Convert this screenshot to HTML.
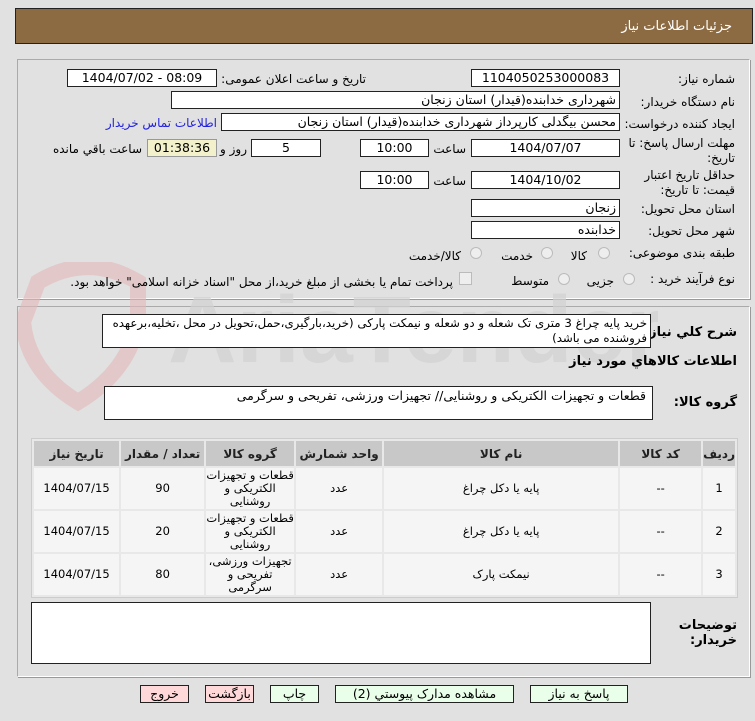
<!DOCTYPE html>
<html><head><meta charset="utf-8"><style>
*{box-sizing:border-box;margin:0;padding:0}
body{width:755px;height:721px;background:#e1e1e1;font-family:"DejaVu Sans","Liberation Sans",sans-serif;font-size:12px;color:#000;position:relative;overflow:hidden}
.a{position:absolute}
.hdr{left:15px;top:8px;width:738px;height:36px;background:#8c6b43;border:1px solid #222;color:#fff;font-size:13px;text-align:right;padding:10px 20px 0 0}
.pan{border:1px solid #aaa;border-right-color:#fff;border-bottom-color:#fff;box-shadow:1px 1px 0 #999}
.in{position:absolute;background:#fff;border:1px solid #222;height:18px;text-align:center;line-height:16px;font-size:12.5px;white-space:nowrap;overflow:hidden}
.r{direction:rtl;text-align:right;padding-right:3px}
.l{position:absolute;direction:rtl;text-align:right;white-space:nowrap}
.b{font-weight:bold}
.rad{position:absolute;width:12px;height:12px;border-radius:50%;border:1px solid #bbb;background:#eee}
table{border-collapse:separate;border-spacing:2px;background:#e8e8e8;border:1px solid #ccc}
th{background:#c8c8c8;height:25px;font-weight:bold;font-size:12px;color:#222;padding:0}
td{background:#f5f5f5;text-align:center;font-size:11.5px;line-height:13px;padding:0}
.btn{position:absolute;top:685px;height:18px;border:1px solid #222;text-align:center;line-height:16px;font-size:12.5px}
.g{background:#eaffea}.p{background:#ffd9d9}
</style></head><body>
<div class="a hdr">جزئیات اطلاعات نیاز</div>
<div class="a pan" style="left:17px;top:59px;width:733px;height:240px"></div>
<div class="a pan" style="left:17px;top:306px;width:733px;height:371px"></div>
<svg class="a" style="left:18px;top:262px" width="640" height="160"><path d="M20 20 Q70 -10 120 20 L120 60 Q110 110 60 140 Q10 110 5 60 Z" fill="none" stroke="#e3b8b8" stroke-width="16" opacity=".6"/><text x="150" y="100" font-size="95" font-family="Liberation Sans" font-weight="bold" fill="#d2d2d2" opacity=".7">AriaTender.neT</text></svg>

<div class="l" style="right:20px;top:72px">شماره نیاز:</div>
<div class="in" style="left:471px;top:69px;width:149px">1104050253000083</div>
<div class="l" style="right:389px;top:72px">تاریخ و ساعت اعلان عمومی:</div>
<div class="in" style="left:67px;top:69px;width:150px">1404/07/02 - 08:09</div>

<div class="l" style="right:20px;top:95px">نام دستگاه خریدار:</div>
<div class="in r" style="left:171px;top:91px;width:449px">شهرداری خدابنده(قیدار) استان زنجان</div>

<div class="l" style="right:20px;top:117px">ایجاد کننده درخواست:</div>
<div class="in r" style="left:221px;top:113px;width:399px">محسن بیگدلی کارپرداز شهرداری خدابنده(قیدار) استان زنجان</div>
<div class="l" style="right:538px;top:116px;color:#2222dd">اطلاعات تماس خریدار</div>

<div class="l" style="right:20px;top:136px;line-height:15px">مهلت ارسال پاسخ: تا<br>تاریخ:</div>
<div class="in" style="left:471px;top:139px;width:149px">1404/07/07</div>
<div class="l" style="right:289px;top:142px">ساعت</div>
<div class="in" style="left:360px;top:139px;width:69px">10:00</div>
<div class="in" style="left:251px;top:139px;width:70px">5</div>
<div class="l" style="right:508px;top:142px">روز و</div>
<div class="in" style="left:147px;top:139px;width:70px;background:#f3f1cc;border-color:#999">01:38:36</div>
<div class="l" style="right:613px;top:142px">ساعت باقي مانده</div>

<div class="l" style="right:20px;top:168px;line-height:15px">حداقل تاریخ اعتبار<br>قیمت: تا تاریخ:</div>
<div class="in" style="left:471px;top:171px;width:149px">1404/10/02</div>
<div class="l" style="right:289px;top:174px">ساعت</div>
<div class="in" style="left:360px;top:171px;width:69px">10:00</div>

<div class="l" style="right:20px;top:202px">استان محل تحویل:</div>
<div class="in r" style="left:471px;top:199px;width:149px">زنجان</div>
<div class="l" style="right:20px;top:224px">شهر محل تحویل:</div>
<div class="in r" style="left:471px;top:221px;width:149px">خدابنده</div>

<div class="l" style="right:20px;top:246px">طبقه بندی موضوعی:</div>
<div class="rad" style="left:598px;top:247px"></div><div class="l" style="right:168px;top:249px">کالا</div>
<div class="rad" style="left:541px;top:247px"></div><div class="l" style="right:222px;top:249px">خدمت</div>
<div class="rad" style="left:470px;top:247px"></div><div class="l" style="right:294px;top:249px">کالا/خدمت</div>

<div class="l" style="right:20px;top:272px">نوع فرآیند خرید :</div>
<div class="rad" style="left:623px;top:273px"></div><div class="l" style="right:141px;top:274px">جزیی</div>
<div class="rad" style="left:558px;top:273px"></div><div class="l" style="right:206px;top:274px">متوسط</div>
<div class="a" style="left:459px;top:272px;width:13px;height:13px;border:1px solid #bbb;background:#eee"></div>
<div class="l" style="right:302px;top:275px">پرداخت تمام یا بخشی از مبلغ خرید،از محل "اسناد خزانه اسلامی" خواهد بود.</div>

<div class="l b" style="right:18px;top:325px;font-size:13px">شرح كلي نياز:</div>
<div class="in r" style="left:102px;top:314px;width:549px;height:34px;line-height:15px;white-space:normal;padding-top:1px;font-size:11.8px;letter-spacing:-0.2px">خرید پایه چراغ 3 متری تک شعله و دو شعله و نیمکت پارکی (خرید،بارگیری،حمل،تحویل در محل ،تخلیه،برعهده فروشنده می باشد)</div>
<div class="l b" style="right:18px;top:354px;font-size:13px">اطلاعات کالاهاي مورد نياز</div>
<div class="l b" style="right:18px;top:395px;font-size:13px">گروه کالا:</div>
<div class="in r" style="left:104px;top:386px;width:549px;height:34px;padding-right:6px;padding-top:1px">قطعات و تجهیزات الکتریکی و روشنایی// تجهیزات ورزشی، تفریحی و سرگرمی</div>

<table class="a" style="left:31px;top:438px;width:707px;direction:rtl">
<tr><th style="width:29px">ردیف</th><th style="width:81px">کد کالا</th><th style="width:234px">نام کالا</th><th style="width:86px">واحد شمارش</th><th style="width:88px">گروه کالا</th><th style="width:83px">تعداد / مقدار</th><th>تاریخ نیاز</th></tr>
<tr style="height:41px"><td>1</td><td>--</td><td>پایه یا دکل چراغ</td><td>عدد</td><td>قطعات و تجهیزات الکتریکی و روشنایی</td><td>90</td><td>1404/07/15</td></tr>
<tr style="height:41px"><td>2</td><td>--</td><td>پایه یا دکل چراغ</td><td>عدد</td><td>قطعات و تجهیزات الکتریکی و روشنایی</td><td>20</td><td>1404/07/15</td></tr>
<tr style="height:41px"><td>3</td><td>--</td><td>نیمکت پارک</td><td>عدد</td><td>تجهیزات ورزشی، تفریحی و سرگرمی</td><td>80</td><td>1404/07/15</td></tr>
</table>

<div class="l b" style="right:18px;top:618px;font-size:13px;line-height:15px">توضیحات<br>خریدار:</div>
<div class="in" style="left:31px;top:602px;width:620px;height:62px"></div>

<div class="btn g" style="left:530px;width:98px">پاسخ به نیاز</div>
<div class="btn g" style="left:335px;width:179px">مشاهده مدارک پیوستي (2)</div>
<div class="btn g" style="left:270px;width:49px">چاپ</div>
<div class="btn p" style="left:205px;width:49px">بازگشت</div>
<div class="btn p" style="left:140px;width:49px">خروج</div>
</body></html>
